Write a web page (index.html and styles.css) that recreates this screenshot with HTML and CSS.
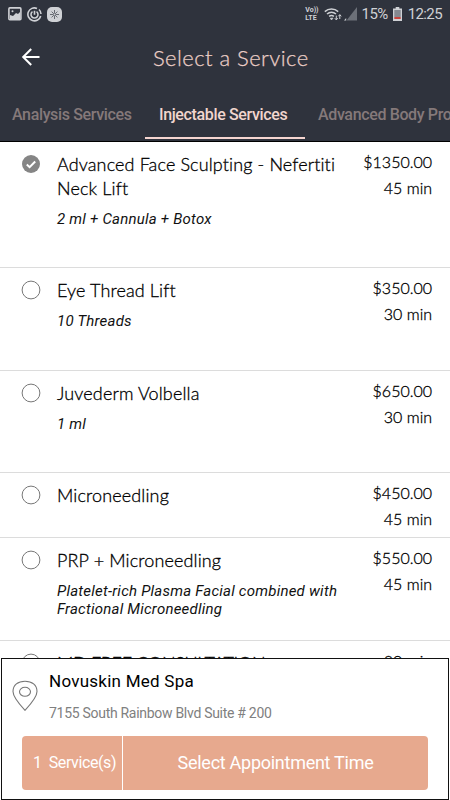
FILE: index.html
```
<!DOCTYPE html>
<html lang="en">
<head>
  <meta charset="UTF-8">
  <meta name="viewport" content="width=device-width, initial-scale=1">
  <title>Select a Service</title>
  <link rel="stylesheet" href="styles.css">
</head>
<body>
  <div class="app">
    <header class="header">
      <div class="status-bar">
        <div class="status-left">
          <svg width="14" height="14" viewBox="0 0 14 14"><rect x=".9" y=".9" width="12" height="11.8" rx="1" fill="none" stroke="#cfd1d5" stroke-width="1.6"/><path d="M2 8l3 1 3-3 2 1 2-2v7H2z" fill="#cfd1d5"/><circle cx="4.5" cy="4.2" r="1" fill="#cfd1d5"/></svg>
          <svg width="15" height="15" viewBox="0 0 15 15" fill="none" stroke="#cfd1d5" stroke-width="1.6"><path d="M10 1.4A6.5 6.5 0 1 0 13.7 9M12 2.5A6.5 6.5 0 0 1 14 7"/><path d="M5.5 4.7a3.5 3.5 0 1 0 4 0M7.5 3.8v4"/></svg>
          <svg width="15" height="15" viewBox="0 0 15 15"><rect width="15" height="15" rx="5" fill="#cfd1d5"/><path d="M7.5 3v9M3 7.5h9M4.6 4.6l5.8 5.8M10.4 4.6l-5.8 5.8" stroke="#4b4f57" stroke-width=".8"/><circle cx="7.5" cy="7.5" r="1" fill="#cfd1d5"/></svg>
        </div>
        <div class="status-right">
          <span class="volte"><span>Vo))</span><span>LTE</span></span>
          <svg class="wifi" width="18" height="15" viewBox="0 0 18 15" fill="none" stroke="#cfd1d5" stroke-width="1.5"><path d="M.8 4.6a10 10 0 0 1 13.4 0M3 7a7 7 0 0 1 9 0M5.1 9.3a4 4 0 0 1 4.8 0"/><path d="M6.2 11.2L7.5 13l1.6-2z" fill="#cfd1d5" stroke-width=".6"/><path d="M12.3 8.6v4.2M10.8 11.2l1.5 1.7 1.5-1.7M15.8 12V7.7M14.3 9.3l1.5-1.6 1.5 1.6" stroke-width="1"/></svg>
          <svg class="signal" width="13" height="14" viewBox="0 0 13 14"><path d="M13 0v13.5H2.5z" fill="#6c7078"/><path d="M0 13.5l2.2-2.6v2.6z" fill="#cfd1d5"/></svg>
          <span class="percent">15%</span>
          <svg class="battery" width="9" height="14" viewBox="0 0 9 14"><path d="M2.7 0h3.6v1.4H9V14H0V1.4h2.7z" fill="#cfd1d5"/><path d="M1.3 3h6.4v7H1.3z" fill="#858990"/><path d="M1.3 10h6.4v2H1.3z" fill="#c9443d"/></svg>
          <span class="clock">12:25</span>
        </div>
      </div>
      <div class="title-bar">
        <svg class="back" width="20" height="20" viewBox="0 0 20 20" fill="none" stroke="#fff" stroke-width="2"><path d="M18.5 10H2.5M10.2 2L2.2 10l8 8"/></svg>
        <h1>Select a Service</h1>
      </div>
      <nav class="tabs">
        <a class="tab tab-analysis">Analysis Services</a>
        <a class="tab tab-active">Injectable Services</a>
        <a class="tab tab-body">Advanced Body Procedures</a>
      </nav>
    </header>

    <main class="services">
      <div class="service service-tall">
        <svg class="radio" width="20" height="20" viewBox="0 0 20 20"><circle cx="10" cy="10" r="9" fill="#858585"/><path d="M5.8 10.6l2.8 2.6 5.6-5.7" fill="none" stroke="#fff" stroke-width="2"/></svg>
        <div class="info">
          <h2>Advanced Face Sculpting - Nefertiti<br>Neck Lift</h2>
          <p>2 ml + Cannula + Botox</p>
        </div>
        <div class="price"><span>$1350.00</span><span>45 min</span></div>
      </div>
      <div class="service">
        <svg class="radio" width="20" height="20" viewBox="0 0 20 20"><circle cx="10" cy="10" r="8.9" fill="none" stroke="#777"/></svg>
        <div class="info">
          <h2>Eye Thread Lift</h2>
          <p>10 Threads</p>
        </div>
        <div class="price"><span>$350.00</span><span>30 min</span></div>
      </div>
      <div class="service">
        <svg class="radio" width="20" height="20" viewBox="0 0 20 20"><circle cx="10" cy="10" r="8.9" fill="none" stroke="#777"/></svg>
        <div class="info">
          <h2>Juvederm Volbella</h2>
          <p>1 ml</p>
        </div>
        <div class="price"><span>$650.00</span><span>30 min</span></div>
      </div>
      <div class="service service-short">
        <svg class="radio" width="20" height="20" viewBox="0 0 20 20"><circle cx="10" cy="10" r="8.9" fill="none" stroke="#777"/></svg>
        <div class="info">
          <h2>Microneedling</h2>
        </div>
        <div class="price"><span>$450.00</span><span>45 min</span></div>
      </div>
      <div class="service">
        <svg class="radio" width="20" height="20" viewBox="0 0 20 20"><circle cx="10" cy="10" r="8.9" fill="none" stroke="#777"/></svg>
        <div class="info">
          <h2>PRP + Microneedling</h2>
          <p>Platelet-rich Plasma Facial combined with<br>Fractional Microneedling</p>
        </div>
        <div class="price"><span>$550.00</span><span>45 min</span></div>
      </div>
      <div class="service">
        <svg class="radio" width="20" height="20" viewBox="0 0 20 20"><circle cx="10" cy="10" r="8.9" fill="none" stroke="#777"/></svg>
        <div class="info">
          <h2 class="name-free">MD FREE CONSULTATION</h2>
        </div>
        <div class="price"><span>30 min</span></div>
      </div>
    </main>

    <footer class="booking">
      <div class="place">
        <svg class="pin" width="26" height="32" viewBox="0 0 26 32" fill="none" stroke="#777" stroke-width="1.1"><path d="M13 30.3C9 26 1 17.5 1 11.5C1 5 6 1.2 13 1.2S25 5 25 11.5C25 17.5 17 26 13 30.3z"/><ellipse cx="13" cy="11.8" rx="5.5" ry="4.5"/></svg>
        <div class="place-text">
          <strong>Novuskin Med Spa</strong>
          <span>7155 South Rainbow Blvd Suite # 200</span>
        </div>
      </div>
      <div class="actions">
        <span class="count">1&nbsp; Service(s)</span>
        <button class="select-time">Select Appointment Time</button>
      </div>
    </footer>
  </div>
</body>
</html>
```
FILE: styles.css
```
* {
  box-sizing: border-box;
}

body {
  margin: 0;
  font-family: Roboto, sans-serif;
  color: #111;
  background: #fff;
}

h1, h2, p {
  margin: 0;
  font-weight: 400;
}

svg {
  display: block;
  flex: none;
}

.app {
  display: flex;
  flex-direction: column;
  width: 450px;
  height: 800px;
  overflow: hidden;
}

.header {
  flex: none;
  height: 142px;
  background: #2f333d;
  border-bottom: 1px solid #000;
}

.status-bar {
  display: flex;
  justify-content: space-between;
  height: 28px;
  padding: 0 8px;
  color: #cfd1d5;
}

.status-left, .status-right {
  display: flex;
  align-items: center;
}

.status-left {
  gap: 5px;
}

.volte {
  display: flex;
  flex-direction: column;
  font-size: 7px;
  font-weight: 700;
  line-height: 8px;
  margin-right: 5px;
}

.signal {
  margin: 0 5px 0 2px;
}

.percent, .clock {
  font-size: 15px;
  line-height: 28px;
  letter-spacing: -0.6px;
}

.battery {
  margin: 0 6px 0 5px;
}

.title-bar {
  display: flex;
  align-items: center;
  height: 58px;
  padding-left: 21px;
}

.title-bar h1 {
  margin-left: 112px;
  font-family: Lato, sans-serif;
  font-size: 22px;
  font-weight: 300;
  letter-spacing: 0.45px;
  -webkit-text-stroke: 0.25px;
  color: #eccfc7;
}

.tabs {
  display: flex;
  height: 55px;
  overflow: hidden;
  font-size: 16px;
  font-weight: 500;
  letter-spacing: -0.36px;
  white-space: nowrap;
}

.tab {
  flex: none;
  line-height: 57px;
  color: #85797a;
}

.tab-analysis {
  width: 145px;
  padding-left: 12px;
}

.tab-active {
  width: 160px;
  height: 53px;
  padding-left: 14px;
  color: #f2d6ce;
  border-bottom: 2px solid #f5d5d0;
}

.tab-body {
  padding-left: 13px;
}

.services {
  flex: 1;
  min-height: 0;
  overflow: hidden;
}

.service {
  display: flex;
  height: 102.5px;
  padding: 0 18px 0 21px;
  border-bottom: 1px solid #dcdcdc;
}

.service-tall {
  height: 126px;
}

.service-short {
  height: 65px;
}

.radio {
  margin-top: 12px;
}

.info {
  flex: 1;
  padding: 10px 0 0 16px;
  white-space: nowrap;
}

.info h2 {
  font-family: Lato, sans-serif;
  font-size: 18px;
  font-weight: 300;
  letter-spacing: 0.13px;
  line-height: 24px;
  -webkit-text-stroke: 0.3px;
  color: #000;
}

.info .name-free {
  letter-spacing: -0.3px;
}

.info p {
  margin-top: 10px;
  font-size: 15px;
  font-style: italic;
  letter-spacing: 0.23px;
  line-height: 18px;
}

.price {
  display: flex;
  flex-direction: column;
  padding-top: 7px;
  font-family: Lato, sans-serif;
  font-size: 16px;
  font-weight: 300;
  line-height: 26px;
  text-align: right;
  -webkit-text-stroke: 0.3px;
  color: #000;
}

.booking {
  flex: none;
  height: 142px;
  margin: 0 1px;
  padding: 11px 20px 0 10px;
  background: #fff;
  border: 1px solid #111;
}

.place {
  display: flex;
  height: 66px;
}

.pin {
  margin-top: 10px;
}

.place-text {
  display: flex;
  flex-direction: column;
  margin-left: 11px;
}

.place-text strong {
  font-size: 17px;
  font-weight: 400;
  letter-spacing: 0.25px;
  line-height: 23px;
  color: #000;
}

.place-text span {
  margin-top: 10px;
  font-size: 14px;
  letter-spacing: -0.29px;
  line-height: 20px;
  color: #808080;
}

.actions {
  display: flex;
  height: 54px;
  margin-left: 10px;
  border-radius: 4px;
  overflow: hidden;
  color: #fff;
  background: #e7a98e;
}

.count {
  width: 101px;
  padding-left: 11px;
  border-right: 1px solid #fff;
  font-size: 16px;
  letter-spacing: -0.4px;
  line-height: 54px;
  white-space: nowrap;
}

.select-time {
  flex: 1;
  padding: 0 0 1px;
  border: none;
  font-family: inherit;
  font-size: 18px;
  letter-spacing: -0.27px;
  color: #fff;
  background: none;
}
```
